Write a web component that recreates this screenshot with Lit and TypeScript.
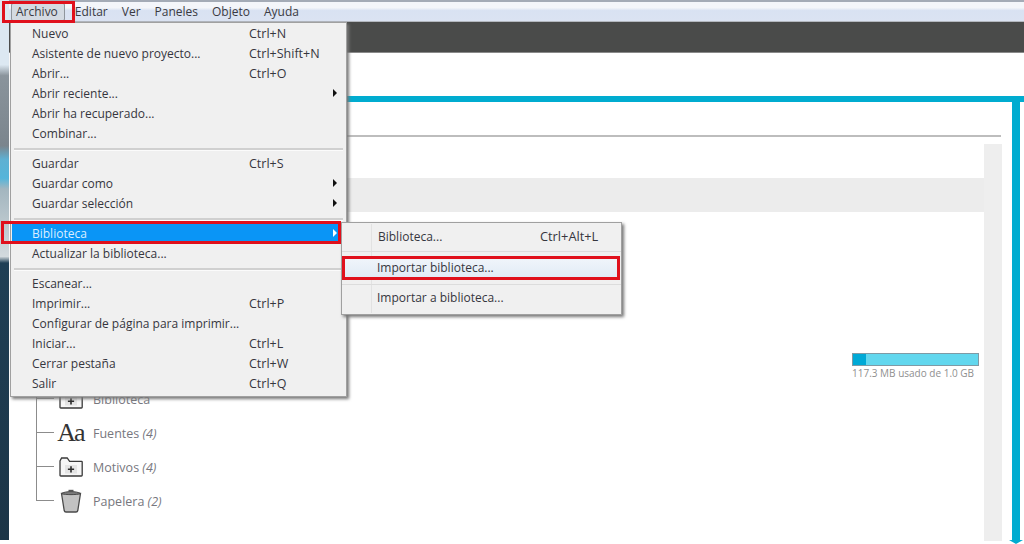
import { LitElement, html, css, svg } from "lit";
import { customElement } from "lit/decorators.js";

type Item = { t?: string; k?: string; sub?: boolean; sel?: boolean; sep?: boolean };
const items: Item[] = [
  { t: "Nuevo", k: "Ctrl+N" },
  { t: "Asistente de nuevo proyecto...", k: "Ctrl+Shift+N" },
  { t: "Abrir...", k: "Ctrl+O" },
  { t: "Abrir reciente...", sub: true },
  { t: "Abrir ha recuperado..." },
  { t: "Combinar..." },
  { sep: true },
  { t: "Guardar", k: "Ctrl+S" },
  { t: "Guardar como", sub: true },
  { t: "Guardar selección", sub: true },
  { sep: true },
  { t: "Biblioteca", sub: true, sel: true },
  { t: "Actualizar la biblioteca..." },
  { sep: true },
  { t: "Escanear..." },
  { t: "Imprimir...", k: "Ctrl+P" },
  { t: "Configurar de página para imprimir..." },
  { t: "Iniciar...", k: "Ctrl+L" },
  { t: "Cerrar pestaña", k: "Ctrl+W" },
  { t: "Salir", k: "Ctrl+Q" },
];

const folder = svg`<svg width="24" height="20" viewBox="0 0 24 20"><path d="M1 18.2V4L2.6 1H8.2L10.6 4.4H22.6Q23.2 4.4 23.2 5V18.2Q23.2 19 22.4 19H1.8Q1 19 1 18.2Z" fill="#f6f6f6" stroke="#3a3a3a" stroke-width="1.3"/><rect x="6" y="8" width="12" height="8.5" fill="#e4e4e4"/><path d="M12 9.2v6.2M8.9 12.3h6.2" stroke="#2c2c2c" stroke-width="1.6"/></svg>`;
const trash = svg`<svg width="22" height="24" viewBox="0 0 22 24"><path d="M1.5 4.5H20.5L17.8 21.5Q17.5 23 16 23H6Q4.5 23 4.2 21.5Z" fill="#c2c2c2" stroke="#4a4a4a" stroke-width="1.3"/><path d="M1.5 4.5C5 2 17 2 20.5 4.5C17 6 5 6 1.5 4.5Z" fill="#7c7c7c" stroke="#4a4a4a" stroke-width="1"/><rect x="8.5" y="0.8" width="5" height="2.2" fill="#555"/></svg>`;

@customElement("app-root")
export class AppRoot extends LitElement {
  static styles = css`
    :host { display: block; width: 1024px; height: 544px; overflow: hidden; font-family: "Open Sans", "Liberation Sans", sans-serif; }
    .page { position: relative; width: 1024px; height: 544px; background: #fff; display: flex; flex-direction: column; overflow: hidden; }
    .menubar { height: 22px; flex: none; box-sizing: border-box; border-top: 2px solid #a4abb6; border-bottom: 1px solid #b4b8bf; background: linear-gradient(#f4f6fa 0 30%, #d9e2f2 45%, #dbe3f2); display: flex; align-items: center; padding-left: 12px; font-size: 12px; color: #3a3a42; }
    .mi { padding: 0 5px; margin-right: 4px; line-height: 16px; }
    .mi.open { border: 1px solid #8f959c; border-radius: 2px; background: #d4dae2; padding: 0 6px 0 4px; margin-right: 5px; margin-left: -1px; }
    .dark { height: 31px; flex: none; box-sizing: border-box; background: #4a4b4a; border-bottom: 1px solid #8a8a8a; }
    .body { position: relative; flex: 1; display: flex; }
    .strip { position: absolute; left: 0; top: -53px; bottom: 4px; width: 9px; background: linear-gradient(#dce8f2 0 12%, #8a949c 14%, #7b858d 27%, #5fb0d2 29.5%, #55b5da 33%, #a3b6bf 35%, #bcc8ce 41.5%, #d3dade 47.5%, #1f3f55 48.7%, #1c3547 100%); }
    .hbar { position: absolute; left: 340px; right: 0; top: 43px; height: 6px; background: #00acd0; }
    .vbar { position: absolute; right: 4px; top: 43px; bottom: 4px; width: 8px; background: #00acd0; }
    .vbar::after { content: ""; position: absolute; left: -3px; bottom: -4px; width: 0; height: 0; border-left: 7px solid transparent; border-right: 7px solid transparent; border-top: 4px solid #00acd0; }
    .rule { position: absolute; left: 340px; right: 23px; top: 82px; height: 2px; background: #bdbdbd; }
    .scroll { position: absolute; left: 984px; width: 18px; top: 91px; bottom: 3px; background: #eeeeee; }
    .band { position: absolute; left: 340px; width: 644px; top: 125px; height: 34px; background: #ececec; }
    .quota { position: absolute; left: 852px; top: 300px; width: 127px; }
    .track { height: 13px; box-sizing: border-box; border: 1px solid #7f9aa5; background: #62d7ee; }
    .fill { height: 100%; background: #00a9d6; }
    .quota-t { font-size: 10px; color: #8f8f8f; white-space: nowrap; margin-top: 1px; line-height: 13px; }
    .tree { position: absolute; left: 36px; top: 340px; width: 1px; height: 107px; background: #8c8c8c; }
    .row { position: absolute; left: 36px; display: flex; align-items: center; height: 30px; }
    .tick { width: 18px; height: 1px; background: #8c8c8c; flex: none; margin-top: -2px; }
    .ico { width: 33px; margin-right: 6px; display: flex; justify-content: center; flex: none; }
    .aa { font-family: "Liberation Serif", serif; font-size: 26px; letter-spacing: -2px; color: #333; line-height: 30px; }
    .lab { font-size: 12.5px; color: #77777e; }
    .lab i { font-style: italic; }
    .menu { position: absolute; left: 10px; top: 22px; width: 337px; box-sizing: border-box; background: #f0f0f0; border: 1px solid #a0a0a0; box-shadow: 2px 2px 3px #777; padding: 0 1px 3px 1px; font-size: 12px; color: #36363e; }
    .item { position: relative; display: flex; height: 20px; align-items: center; padding-left: 20px; white-space: nowrap; }
    .item .k { position: absolute; left: 237px; font-size: 12.5px; }
    .item .arr { position: absolute; right: 8px; top: 6px; width: 0; height: 0; border-left: 4px solid #111; border-top: 4px solid transparent; border-bottom: 4px solid transparent; }
    .item.sel { background: #0a95f6; color: #dbeeff; }
    .item.sel .arr { border-left-color: #fff; }
    .sep { height: 2px; background: #d0d0d0; border-bottom: 1px solid #fbfbfb; margin: 5px 2px 2px 2px; }
    .sub { position: absolute; left: 341px; top: 222px; width: 281px; height: 93px; box-sizing: border-box; background: #f0f0f0; border: 1px solid #a0a0a0; box-shadow: 2px 2px 3px #777; font-size: 12px; color: #36363e; display: flex; flex-direction: column; }
    .sub::before { content: ""; position: absolute; left: 29px; top: 1px; bottom: 1px; width: 1px; background: #e2e2e2; }
    .si { position: relative; height: 28px; box-sizing: border-box; padding-bottom: 2px; display: flex; align-items: center; padding-left: 36px; flex: none; }
    .si .k { position: absolute; left: 198px; font-size: 12.8px; }
    .si.hi { height: 24px; padding-bottom: 2px; margin: 4px 1px; padding-left: 34px; background: linear-gradient(#f2f6fb, #dfe9f5); }
    .si.last { height: 28px; padding-bottom: 3px; padding-left: 35px; }
    .ssep { height: 1px; background: #dcdcdc; flex: none; position: relative; }
    .red { position: absolute; border: 3px solid #e0101c; box-sizing: border-box; pointer-events: none; }
    .r1 { left: 2px; top: 1px; width: 73px; height: 22px; }
    .r2 { left: 1px; top: 221px; width: 340px; height: 23px; }
    .r3 { left: 342px; top: 256px; width: 278px; height: 24px; }
  `;

  render() {
    return html`<div class="page">
      <div class="menubar">
        <span class="mi open">Archivo</span>
        ${["Editar", "Ver", "Paneles", "Objeto", "Ayuda"].map((m) => html`<span class="mi">${m}</span>`)}
      </div>
      <div class="dark"></div>
      <div class="body">
        <div class="strip"></div>
        <div class="hbar"></div>
        <div class="vbar"></div>
        <div class="rule"></div>
        <div class="scroll"></div>
        <div class="band"></div>
        <div class="quota">
          <div class="track"><div class="fill" style="width:10.5%"></div></div>
          <div class="quota-t">117.3 MB usado de 1.0 GB</div>
        </div>
        <div class="tree"></div>
        <div class="row" style="top:331px"><span class="tick"></span><span class="ico">${folder}</span><span class="lab">Biblioteca</span></div>
        <div class="row" style="top:365px"><span class="tick"></span><span class="ico"><span class="aa">Aa</span></span><span class="lab">Fuentes <i>(4)</i></span></div>
        <div class="row" style="top:399px"><span class="tick"></span><span class="ico">${folder}</span><span class="lab">Motivos <i>(4)</i></span></div>
        <div class="row" style="top:433px"><span class="tick"></span><span class="ico">${trash}</span><span class="lab">Papelera <i>(2)</i></span></div>
      </div>
      <div class="menu">
        ${items.map((i) =>
          i.sep
            ? html`<div class="sep"></div>`
            : html`<div class="item ${i.sel ? "sel" : ""}">
                <span>${i.t}</span>
                ${i.k ? html`<span class="k">${i.k}</span>` : ""}
                ${i.sub ? html`<span class="arr"></span>` : ""}
              </div>`
        )}
      </div>
      <div class="sub">
        <div class="si">Biblioteca...<span class="k">Ctrl+Alt+L</span></div>
        <div class="ssep"></div>
        <div class="si hi">Importar biblioteca...</div>
        <div class="ssep"></div>
        <div class="si last">Importar a biblioteca...</div>
      </div>
      <div class="red r1"></div>
      <div class="red r2"></div>
      <div class="red r3"></div>
    </div>`;
  }
}
